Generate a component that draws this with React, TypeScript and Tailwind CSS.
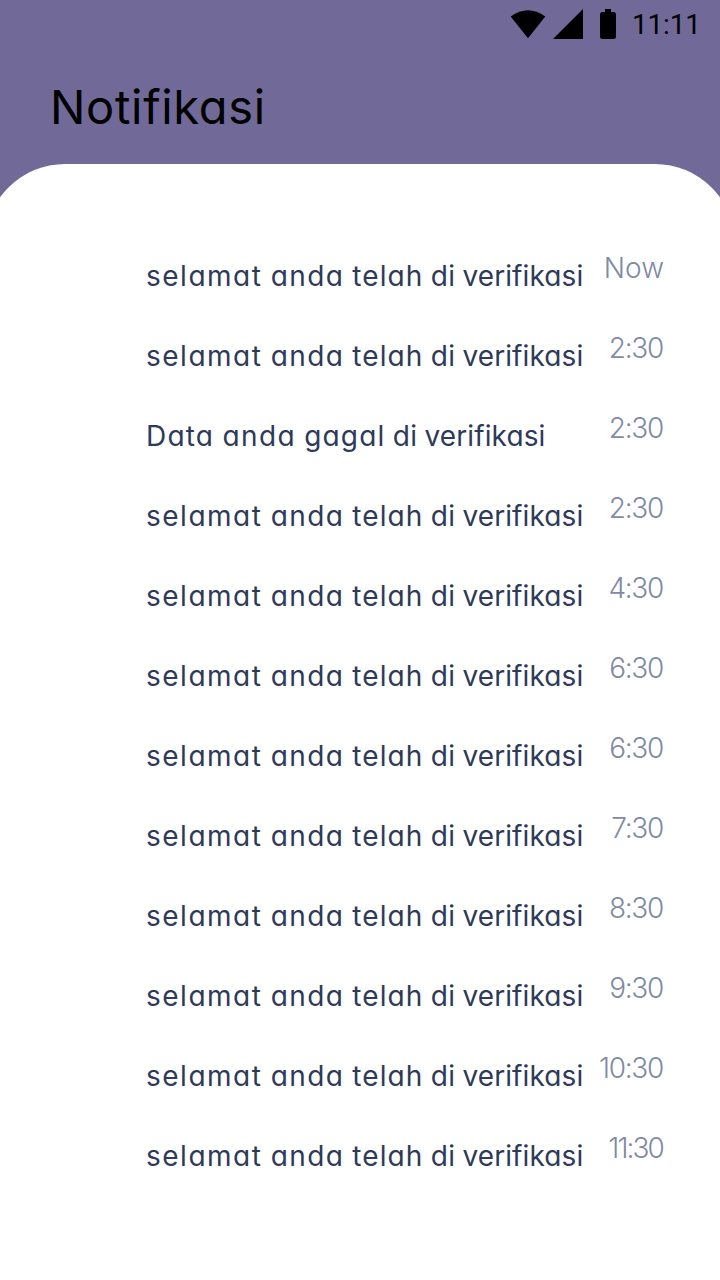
import clsx from "clsx";

type Notification = { message: string; time: string };

const verified = "selamat anda telah di verifikasi";

const notifications: Notification[] = [
  { message: verified, time: "Now" },
  { message: verified, time: "2:30" },
  { message: "Data anda gagal di verifikasi", time: "2:30" },
  { message: verified, time: "2:30" },
  { message: verified, time: "4:30" },
  { message: verified, time: "6:30" },
  { message: verified, time: "6:30" },
  { message: verified, time: "7:30" },
  { message: verified, time: "8:30" },
  { message: verified, time: "9:30" },
  { message: verified, time: "10:30" },
  { message: verified, time: "11:30" },
];

const wordTracking: Record<string, string> = {
  selamat: "tracking-[1.5px]",
  anda: "tracking-[1.4px]",
  telah: "tracking-[1.1px]",
  Data: "tracking-[1.2px]",
  gagal: "tracking-[1.2px]",
  di: "tracking-[0.4px]",
  verifikasi: "tracking-[0.1px]",
};

function StatusBar() {
  return (
    <div className="flex h-12 items-center justify-end pr-5">
      <svg className="h-12 w-[120px] shrink-0" viewBox="0 0 120 48" fill="#000" aria-hidden="true">
        <path d="M10.7 16.6Q28 3.8 45.3 16.6L28 38.3Z" />
        <path d="M53 39L83 9V39Z" />
        <path d="M105 9h6v3h2.5q2.5 0 2.5 2.5v22q0 2.5-2.5 2.5h-11q-2.5 0-2.5-2.5v-22q0-2.5 2.5-2.5h2.5z" />
      </svg>
      <span className="ml-3 w-[68px] pt-0.5 font-['Roboto',sans-serif] text-[28px] leading-[48px] tracking-[-0.2px] text-black">
        11:11
      </span>
    </div>
  );
}

function Message({ text }: { text: string }) {
  return (
    <span className="pt-5 text-[28px] leading-10 font-[400] text-[#2e3a59] [word-spacing:-1px]">
      {text.split(" ").map((word, index) => (
        <span key={index} className={wordTracking[word]}>
          {index > 0 && " "}
          {word}
        </span>
      ))}
    </span>
  );
}

function Time({ value }: { value: string }) {
  return (
    <time
      className={clsx(
        "pt-3 text-[28px] leading-10 font-[260] text-[#7f8aa5]",
        value === "Now" && "-mr-px",
        value === "11:30" && "tracking-[-1.9px]",
        value !== "Now" && value !== "11:30" && "tracking-[-1.3px]",
      )}
    >
      {value}
    </time>
  );
}

export default function App() {
  return (
    <div className="flex h-[1280px] w-[720px] flex-col overflow-hidden bg-[#716998] font-['Inter',sans-serif] [font-feature-settings:'cv11','calt'_0]">
      <StatusBar />
      <h1 className="mt-[27px] h-[89px] pl-[50px] text-[47px] leading-[64px] font-[380] tracking-[0.7px] text-black">
        Notifikasi
      </h1>
      <main className="-mx-[15px] flex-1 rounded-t-[80px] bg-white pt-[72px] pr-[72px] pl-[161px]">
        <ul>
          {notifications.map((item, index) => (
            <li key={index} className="flex h-20 items-start justify-between whitespace-nowrap">
              <Message text={item.message} />
              <Time value={item.time} />
            </li>
          ))}
        </ul>
      </main>
    </div>
  );
}
